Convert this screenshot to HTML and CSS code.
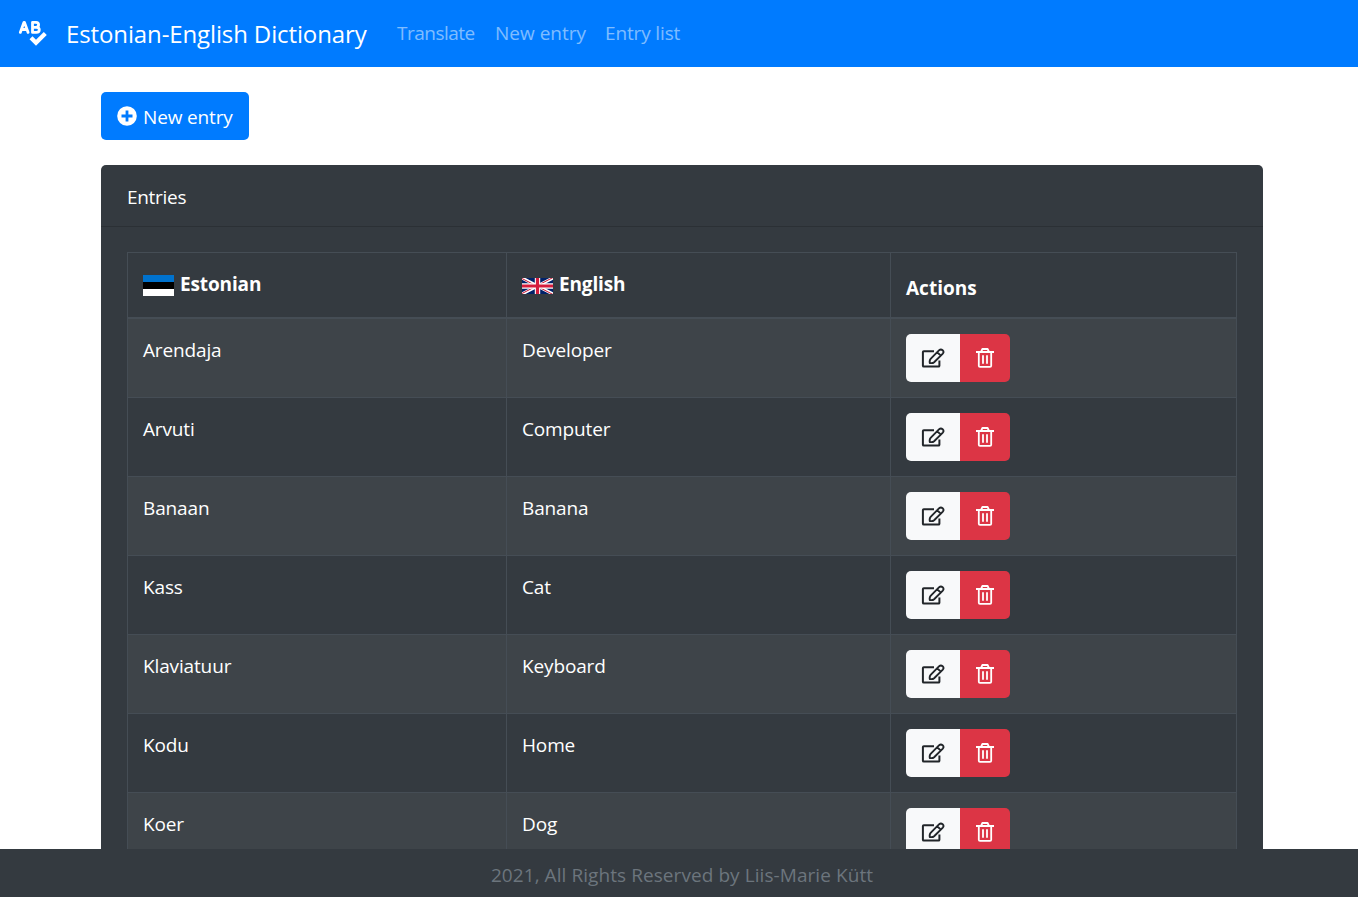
FILE: index.html
```html
<!DOCTYPE html>
<html lang="en">
<head>
<meta charset="utf-8">
<title>Estonian-English Dictionary</title>
<link rel="stylesheet" href="styles.css">
</head>
<body>
<svg class="sprite" aria-hidden="true">
  <symbol id="edit" viewBox="0 0 24 24">
    <path d="M13 5.2H2.8Q1.9 5.2 1.9 6.1V19.7Q1.9 20.6 2.8 20.6H17.5Q18.4 20.6 18.4 19.7V14.5" fill="none" stroke="currentColor" stroke-width="2"/>
    <path d="M8.8 17Q8.3 14.2 9.6 12.8L18.2 4.2Q19.9 2.7 21.6 4.2Q23.3 5.9 21.8 7.6L13.1 16.2Q11.7 17.5 8.8 17ZM16.2 6.2L19.8 9.6" fill="none" stroke="currentColor" stroke-width="1.9" stroke-linejoin="round"/>
  </symbol>
  <symbol id="trash" viewBox="0 0 18 20">
    <path d="M0 4H18M5 4L6.4 1H11.6L13 4M2.8 4V17.7Q2.8 18.9 4 18.9H14Q15.2 18.9 15.2 17.7V4M7 7.2V15.8M11 7.2V15.8" fill="none" stroke="currentColor" stroke-width="1.8" stroke-linejoin="round"/>
  </symbol>
</svg>
<nav class="navbar">
  <svg class="logo" viewBox="0 0 30 28" fill="none" stroke="#fff" stroke-linejoin="round" stroke-linecap="round">
    <path d="M2.3 12.4L6 2.3H6.4L10.1 12.4M3.9 9.5H8.5M14.5 2.3V12.4H18.3Q21.3 12.3 21.3 9.8Q21.3 7.4 18.3 7.3H14.5M14.5 2.3H18Q20.6 2.4 20.6 4.8Q20.6 7.2 18 7.3" stroke-width="2.8"/>
    <path d="M13 17.8L18 22.8L27.3 13.5" stroke-width="4.2" stroke-linejoin="miter" stroke-linecap="butt"/>
  </svg>
  <a class="brand">Estonian-English Dictionary</a>
  <a class="link translate">Translate</a>
  <a class="link new">New entry</a>
  <a class="link list">Entry list</a>
</nav>
<main class="container">
  <a class="btn-new"><svg class="plus" viewBox="0 0 20 20"><circle cx="10" cy="10" r="9.8" fill="#fff"/><path d="M10 4.5V15.5M4.5 10H15.5" stroke="#007bff" stroke-width="2.8"/></svg><span>New entry</span></a>
  <section class="card">
    <header class="card-header">Entries</header>
    <div class="card-body">
      <table class="entries">
        <colgroup><col class="col-et"><col class="col-en"><col class="col-act"></colgroup>
        <thead><tr>
          <th><div class="lang"><svg class="flag-et" viewBox="0 0 31 21"><path d="M0 0H31V7H0Z" fill="#0072ce"/><path d="M0 7H31V14H0Z" fill="#000"/><path d="M0 14H31V21H0Z" fill="#fff"/></svg><span>Estonian</span></div></th>
          <th><div class="lang"><svg class="flag-en" viewBox="0 0 31 16" preserveAspectRatio="none"><path d="M0 0H31V16H0Z" fill="#012169"/><path d="M0 0L31 16M31 0L0 16" stroke="#fff" stroke-width="3.2"/><path d="M0 .5L31 16.5M31 -.5L0 15.5" stroke="#c8102e" stroke-width="1"/><path d="M15.5 0V16M0 8H31" stroke="#fff" stroke-width="5.4"/><path d="M15.5 0V16M0 8H31" stroke="#d51c3d" stroke-width="3.2"/></svg><span>English</span></div></th>
          <th class="actions">Actions</th>
        </tr></thead>
        <tbody>
          <tr><td>Arendaja</td><td>Developer</td><td><div class="group"><a class="edit"><svg><use href="#edit"/></svg></a><a class="trash"><svg><use href="#trash"/></svg></a></div></td></tr>
          <tr><td>Arvuti</td><td>Computer</td><td><div class="group"><a class="edit"><svg><use href="#edit"/></svg></a><a class="trash"><svg><use href="#trash"/></svg></a></div></td></tr>
          <tr><td>Banaan</td><td>Banana</td><td><div class="group"><a class="edit"><svg><use href="#edit"/></svg></a><a class="trash"><svg><use href="#trash"/></svg></a></div></td></tr>
          <tr><td>Kass</td><td>Cat</td><td><div class="group"><a class="edit"><svg><use href="#edit"/></svg></a><a class="trash"><svg><use href="#trash"/></svg></a></div></td></tr>
          <tr><td>Klaviatuur</td><td>Keyboard</td><td><div class="group"><a class="edit"><svg><use href="#edit"/></svg></a><a class="trash"><svg><use href="#trash"/></svg></a></div></td></tr>
          <tr><td>Kodu</td><td>Home</td><td><div class="group"><a class="edit"><svg><use href="#edit"/></svg></a><a class="trash"><svg><use href="#trash"/></svg></a></div></td></tr>
          <tr><td>Koer</td><td>Dog</td><td><div class="group"><a class="edit"><svg><use href="#edit"/></svg></a><a class="trash"><svg><use href="#trash"/></svg></a></div></td></tr>
        </tbody>
      </table>
    </div>
  </section>
</main>
<footer class="footer">2021, All Rights Reserved by Liis-Marie Kütt</footer>
</body>
</html>
```
FILE: styles.css
```css
* { box-sizing: border-box; }
body {
  margin: 0;
  height: 897px;
  display: flex;
  flex-direction: column;
  overflow: hidden;
  background: #fff;
  color: #fff;
  font: 19px/30px "Segoe UI", "Open Sans", "Noto Sans", sans-serif;
  letter-spacing: -0.14px;
}
svg { display: block; flex: none; }
.sprite { display: none; }
.navbar {
  flex: none;
  height: 67px;
  display: flex;
  align-items: center;
  padding: 0 18px;
  background: #007bff;
  white-space: nowrap;
}
.logo { width: 30px; height: 28px; margin-right: 18px; }
.brand { width: 331px; font-size: 24px; letter-spacing: -0.12px; }
.link { padding-bottom: 2px; color: rgba(255, 255, 255, 0.5); }
.translate { width: 98px; letter-spacing: -0.5px; }
.new { width: 110px; letter-spacing: 0; }
.container { flex: 1; min-height: 0; overflow: hidden; padding: 25px 95px 0 101px; }
.btn-new {
  display: flex;
  align-items: center;
  gap: 6px;
  width: 148px;
  height: 48px;
  padding-left: 16px;
  border-radius: 5px;
  background: #007bff;
  white-space: nowrap;
}
.btn-new span { padding-top: 2px; }
.plus { width: 20px; height: 20px; }
.card { margin-top: 25px; border-radius: 5px; background: #343a40; }
.card-header { height: 62px; padding: 17px 26px; border-bottom: 1px solid #2b3035; letter-spacing: -0.3px; }
.card-body { padding: 25px 26px; }
.entries {
  width: 1110px;
  table-layout: fixed;
  border-collapse: separate;
  border-spacing: 0;
  border: solid #454d55;
  border-width: 1px 0 0 1px;
}
.col-et { width: 379px; }
.col-en { width: 384px; }
.col-act { width: 346px; }
th, td {
  padding: 15px;
  text-align: left;
  vertical-align: top;
  border: solid #454d55;
  border-width: 0 1px 1px 0;
}
th { height: 66px; border-bottom-width: 2px; }
th.actions { padding-top: 20px; padding-bottom: 14px; letter-spacing: 0; }
td { height: 79px; padding-top: 16px; }
td:last-child { padding-top: 15px; }
tbody tr:nth-child(odd) { background: rgba(255, 255, 255, 0.05); }
.lang { display: flex; align-items: center; gap: 6px; height: 34px; padding-bottom: 2px; }
.flag-et { width: 31px; height: 21px; margin-top: 3px; }
.flag-en { width: 31px; height: 16px; margin-top: 3px; }
.group { display: flex; width: 104px; height: 48px; border-radius: 5px; overflow: hidden; }
.edit, .trash { display: flex; align-items: center; justify-content: center; }
.edit { width: 54px; background: #f8f9fa; color: #212529; }
.edit svg { width: 24px; height: 24px; }
.trash { width: 50px; background: #dc3545; }
.trash svg { width: 18px; height: 20px; }
.footer {
  flex: none;
  height: 48px;
  padding: 11px 0 0 6px;
  background: #343a40;
  color: #6c757d;
  text-align: center;
  letter-spacing: 0.07px;
}
```
